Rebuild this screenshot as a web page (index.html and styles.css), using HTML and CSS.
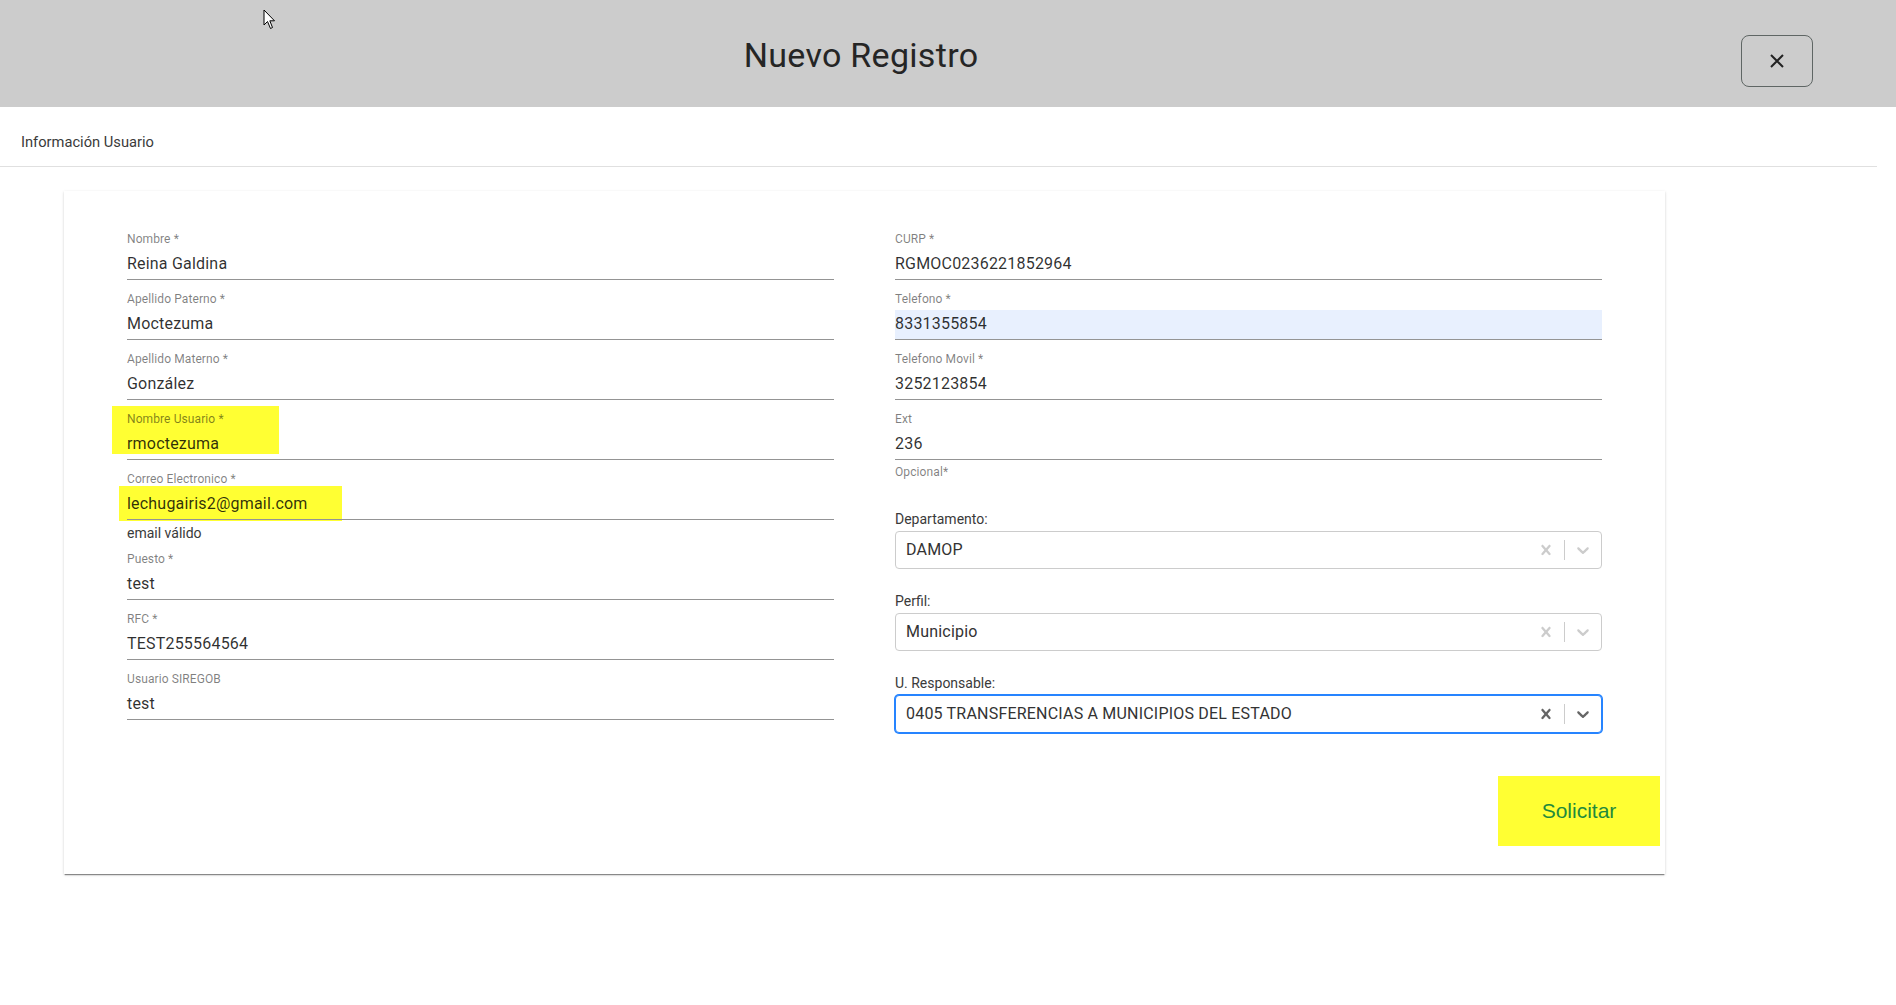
FILE: index.html
```html
<!DOCTYPE html>
<html lang="es">
<head>
<meta charset="utf-8">
<title>Nuevo Registro</title>
<link rel="stylesheet" href="styles.css">
</head>
<body>
<div class="page">
  <header class="modal-header">
    <h1 class="modal-title">Nuevo Registro</h1>
    <div class="close-wrap">
      <button class="close-btn" aria-label="Cerrar">
        <svg width="14" height="14" viewBox="0 0 14 14"><path d="M1 1 L13 13 M13 1 L1 13" stroke="#222" stroke-width="2" fill="none"/></svg>
      </button>
    </div>
  </header>

  <div class="tabbar">Información Usuario</div>

  <section class="card">
    <div class="form-grid">
      <div class="col">
        <div class="field">
          <span class="field-label">Nombre *</span>
          <div class="field-input">Reina Galdina</div>
        </div>
        <div class="field">
          <span class="field-label">Apellido Paterno *</span>
          <div class="field-input">Moctezuma</div>
        </div>
        <div class="field">
          <span class="field-label">Apellido Materno *</span>
          <div class="field-input">González</div>
        </div>
        <div class="field">
          <span class="mark mark-user"></span>
          <span class="field-label">Nombre Usuario *</span>
          <div class="field-input">rmoctezuma</div>
        </div>
        <div class="field field-email">
          <span class="mark mark-email"></span>
          <span class="field-label">Correo Electronico *</span>
          <div class="field-input">lechugairis2@gmail.com</div>
          <div class="helper-dark">email válido</div>
        </div>
        <div class="field">
          <span class="field-label">Puesto *</span>
          <div class="field-input">test</div>
        </div>
        <div class="field">
          <span class="field-label">RFC *</span>
          <div class="field-input">TEST255564564</div>
        </div>
        <div class="field field-last">
          <span class="field-label">Usuario SIREGOB</span>
          <div class="field-input">test</div>
        </div>
      </div>

      <div class="col">
        <div class="field">
          <span class="field-label">CURP *</span>
          <div class="field-input">RGMOC0236221852964</div>
        </div>
        <div class="field">
          <span class="field-label">Telefono *</span>
          <div class="field-input autofill">8331355854</div>
        </div>
        <div class="field">
          <span class="field-label">Telefono Movil *</span>
          <div class="field-input">3252123854</div>
        </div>
        <div class="field field-helper">
          <span class="field-label">Ext</span>
          <div class="field-input">236</div>
          <div class="helper">Opcional*</div>
        </div>

        <div class="select-group select-first">
          <div class="select-label">Departamento:</div>
          <div class="select-control">
            <div class="select-value">DAMOP</div>
            <span class="indicator"><svg width="20" height="20" viewBox="0 0 20 20"><path d="M14.348 14.849c-0.469 0.469-1.229 0.469-1.697 0l-2.651-3.030-2.651 3.029c-0.469 0.469-1.229 0.469-1.697 0-0.469-0.469-0.469-1.229 0-1.697l2.758-3.15-2.759-3.152c-0.469-0.469-0.469-1.228 0-1.697s1.228-0.469 1.697 0l2.652 3.031 2.651-3.031c0.469-0.469 1.228-0.469 1.697 0s0.469 1.229 0 1.697l-2.758 3.152 2.758 3.15c0.469 0.469 0.469 1.229 0 1.698z"/></svg></span>
            <span class="sep"></span>
            <span class="indicator"><svg width="20" height="20" viewBox="0 0 20 20"><path d="M4.516 7.548c0.436-0.446 1.043-0.481 1.576 0l3.908 3.747 3.908-3.747c0.533-0.481 1.141-0.446 1.574 0 0.436 0.445 0.408 1.197 0 1.615-0.406 0.418-4.695 4.502-4.695 4.502-0.217 0.223-0.502 0.335-0.787 0.335s-0.57-0.112-0.789-0.335c0 0-4.287-4.084-4.695-4.502s-0.436-1.17 0-1.615z"/></svg></span>
          </div>
        </div>

        <div class="select-group">
          <div class="select-label">Perfil:</div>
          <div class="select-control">
            <div class="select-value">Municipio</div>
            <span class="indicator"><svg width="20" height="20" viewBox="0 0 20 20"><path d="M14.348 14.849c-0.469 0.469-1.229 0.469-1.697 0l-2.651-3.030-2.651 3.029c-0.469 0.469-1.229 0.469-1.697 0-0.469-0.469-0.469-1.229 0-1.697l2.758-3.15-2.759-3.152c-0.469-0.469-0.469-1.228 0-1.697s1.228-0.469 1.697 0l2.652 3.031 2.651-3.031c0.469-0.469 1.228-0.469 1.697 0s0.469 1.229 0 1.697l-2.758 3.152 2.758 3.15c0.469 0.469 0.469 1.229 0 1.698z"/></svg></span>
            <span class="sep"></span>
            <span class="indicator"><svg width="20" height="20" viewBox="0 0 20 20"><path d="M4.516 7.548c0.436-0.446 1.043-0.481 1.576 0l3.908 3.747 3.908-3.747c0.533-0.481 1.141-0.446 1.574 0 0.436 0.445 0.408 1.197 0 1.615-0.406 0.418-4.695 4.502-4.695 4.502-0.217 0.223-0.502 0.335-0.787 0.335s-0.57-0.112-0.789-0.335c0 0-4.287-4.084-4.695-4.502s-0.436-1.170 0-1.615z"/></svg></span>
          </div>
        </div>

        <div class="select-group">
          <div class="select-label">U. Responsable:</div>
          <div class="select-control focused">
            <div class="select-value">0405 TRANSFERENCIAS A MUNICIPIOS DEL ESTADO</div>
            <span class="indicator"><svg width="20" height="20" viewBox="0 0 20 20"><path d="M14.348 14.849c-0.469 0.469-1.229 0.469-1.697 0l-2.651-3.030-2.651 3.029c-0.469 0.469-1.229 0.469-1.697 0-0.469-0.469-0.469-1.229 0-1.697l2.758-3.15-2.759-3.152c-0.469-0.469-0.469-1.228 0-1.697s1.228-0.469 1.697 0l2.652 3.031 2.651-3.031c0.469-0.469 1.228-0.469 1.697 0s0.469 1.229 0 1.697l-2.758 3.152 2.758 3.15c0.469 0.469 0.469 1.229 0 1.698z"/></svg></span>
            <span class="sep"></span>
            <span class="indicator"><svg width="20" height="20" viewBox="0 0 20 20"><path d="M4.516 7.548c0.436-0.446 1.043-0.481 1.576 0l3.908 3.747 3.908-3.747c0.533-0.481 1.141-0.446 1.574 0 0.436 0.445 0.408 1.197 0 1.615-0.406 0.418-4.695 4.502-4.695 4.502-0.217 0.223-0.502 0.335-0.787 0.335s-0.57-0.112-0.789-0.335c0 0-4.287-4.084-4.695-4.502s-0.436-1.17 0-1.615z"/></svg></span>
          </div>
        </div>
      </div>
    </div>

    <div class="actions">
      <button class="submit-btn">Solicitar</button>
    </div>
  </section>

  <svg class="cursor" width="14" height="21" viewBox="0 0 14 21"><path d="M1 1 L1 16 L4.5 12.5 L7.5 19.5 L9.5 18.5 L6.8 11.8 L11.5 11.8 Z" fill="#fff" stroke="#000" stroke-width="1" stroke-linejoin="round"/></svg>
</div>
</body>
</html>
```

FILE: styles.css
```css
html, body {
  margin: 0;
  padding: 0;
  background: #ffffff;
}

body {
  font-family: Roboto, "Liberation Sans", Arial, sans-serif;
  color: rgba(0, 0, 0, 0.87);
}

.page {
  position: relative;
  width: 1896px;
  min-height: 1005px;
}

/* Header */
.modal-header {
  display: flex;
  align-items: flex-start;
  height: 107px;
  box-sizing: border-box;
  padding-top: 35px;
  background: #cccccc;
}

.modal-title {
  flex: 1;
  margin: 0;
  text-align: center;
  font-family: Roboto, sans-serif;
  font-weight: 400;
  font-size: 34px;
  line-height: 40px;
  letter-spacing: 0.3px;
  color: #252525;
}

.close-wrap {
  width: 174px;
}

.close-btn {
  display: flex;
  align-items: center;
  justify-content: center;
  margin-left: 19px;
  width: 72px;
  height: 52px;
  padding: 0;
  border: 1px solid #5f6664;
  border-radius: 8px;
  background: transparent;
}

/* Tab bar */
.tabbar {
  margin-right: 19px;
  height: 60px;
  box-sizing: border-box;
  padding: 25px 0 0 21px;
  border-bottom: 1px solid #e0e0e0;
  font-family: Roboto, sans-serif;
  font-size: 14.7px;
  line-height: 20px;
  color: #3a3a3a;
}

/* Card */
.card {
  margin: 24px 231px 0 64px;
  padding: 40px 0 28px 0;
  background: #ffffff;
  box-shadow: 0 2px 1px -1px rgba(0, 0, 0, 0.35), 0 1px 3px 0 rgba(0, 0, 0, 0.14), 0 1px 1px 0 rgba(0, 0, 0, 0.1);
}

.form-grid {
  display: grid;
  grid-template-columns: 1fr 1fr;
  column-gap: 61px;
  align-items: start;
  padding: 0 63px;
}

/* Text fields */
.field {
  position: relative;
  margin-bottom: 11px;
}

.field-last {
  margin-bottom: 0;
}

.field-label {
  position: relative;
  z-index: 1;
  display: block;
  margin-bottom: 3px;
  font-size: 12px;
  line-height: 16px;
  letter-spacing: 0.1px;
  color: rgba(0, 0, 0, 0.5);
}

.field-input {
  position: relative;
  z-index: 1;
  padding: 4px 0 6px;
  font-size: 16px;
  line-height: 19px;
  letter-spacing: 0.2px;
  color: rgba(0, 0, 0, 0.82);
  border-bottom: 1px solid #949494;
}

.autofill {
  background: #e8f0fe;
}

.field-email {
  margin-bottom: 8px;
}

.helper-dark {
  margin-top: 3px;
  font-size: 14px;
  line-height: 20px;
  color: #3a3a3a;
}

.field-helper {
  margin-bottom: 0;
}

.helper {
  margin-top: 4px;
  font-size: 12px;
  line-height: 16px;
  letter-spacing: 0.1px;
  color: rgba(0, 0, 0, 0.5);
}

/* Annotation highlights */
.mark {
  position: absolute;
  z-index: 0;
  background: #ffff33;
}

.mark-user {
  left: -15px;
  top: -5px;
  width: 167px;
  height: 48px;
}

.mark-email {
  left: -8px;
  top: 15px;
  width: 223px;
  height: 35px;
}

/* Selects */
.select-group {
  margin-top: 22px;
}

.select-first {
  margin-top: 29px;
}

.select-label {
  margin-bottom: 2px;
  font-size: 14px;
  line-height: 20px;
  color: #3a3a3a;
}

.select-control {
  display: flex;
  align-items: center;
  height: 38px;
  box-sizing: border-box;
  border: 1px solid #cccccc;
  border-radius: 4px;
  background: #ffffff;
}

.select-value {
  flex: 1;
  padding: 2px 8px 2px 10px;
  font-size: 16px;
  line-height: 20px;
  letter-spacing: 0.2px;
  color: #333333;
  white-space: nowrap;
}

.indicator {
  display: flex;
  padding: 8px;
  color: #cccccc;
}

.indicator svg {
  fill: currentColor;
  display: block;
}

.sep {
  align-self: stretch;
  width: 1px;
  margin: 8px 0;
  background: #cccccc;
}

.select-control.focused {
  border-color: #2684ff;
  box-shadow: 0 0 0 1px #2684ff;
}

.select-control.focused .indicator {
  color: #666666;
}

/* Actions */
.actions {
  display: flex;
  justify-content: flex-end;
  margin-top: 43px;
  padding-right: 5px;
}

.submit-btn {
  width: 162px;
  height: 70px;
  padding: 0;
  border: none;
  background: #ffff33;
  font-family: "Liberation Sans", Arial, sans-serif;
  font-size: 21px;
  color: #1f8a3c;
}

/* Mouse cursor */
.cursor {
  position: absolute;
  left: 263px;
  top: 9px;
}
```
